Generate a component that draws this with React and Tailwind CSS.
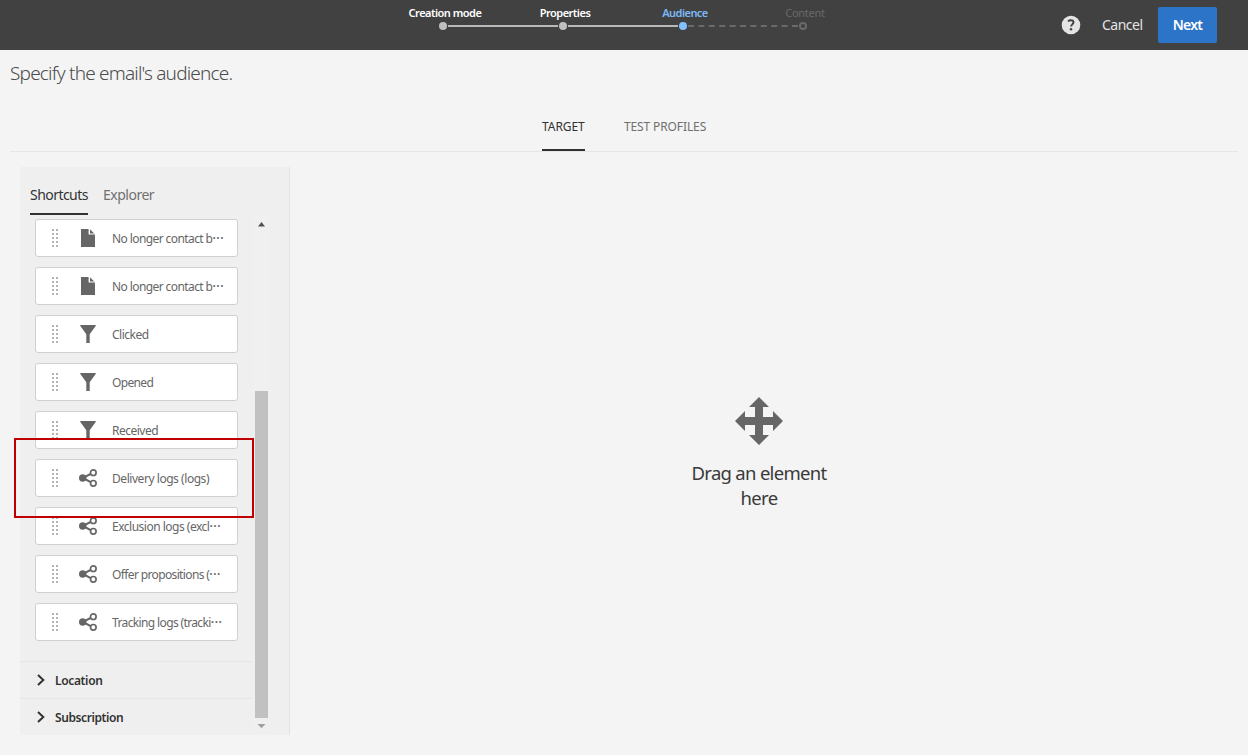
const clean = "font-['Noto_Sans','Open_Sans',sans-serif]";

const STEPS = [
  { label: "Creation mode", tracking: "tracking-[-0.5px]", color: "font-semibold text-white", dot: "bg-[#bfbfbf]", line: "solid" },
  { label: "Properties", tracking: "tracking-[-0.5px]", color: "font-semibold text-white", dot: "bg-[#bfbfbf]", line: "solid" },
  { label: "Audience", tracking: "tracking-[-0.55px]", color: "font-semibold text-[#7cb8f5]", dot: "bg-[#83c0ff]", line: "dashed" },
  { label: "Content", tracking: "tracking-[-0.25px]", color: "font-normal text-[#696969]", dot: "border-2 border-[#6a6a6a]", line: null },
];

const ITEMS = [
  { icon: "doc", label: "No longer contact b", cut: true, tracking: "tracking-[-0.59px]" },
  { icon: "doc", label: "No longer contact b", cut: true, tracking: "tracking-[-0.59px]" },
  { icon: "funnel", label: "Clicked", tracking: "tracking-[-0.5px]" },
  { icon: "funnel", label: "Opened", tracking: "tracking-[-0.65px]" },
  { icon: "funnel", label: "Received", tracking: "tracking-[-0.5px]" },
  { icon: "share", label: "Delivery logs (logs)", tracking: "tracking-[-0.45px]" },
  { icon: "share", label: "Exclusion logs (excl", cut: true, tracking: "tracking-[-0.5px]" },
  { icon: "share", label: "Offer propositions (", cut: true, tracking: "tracking-[-0.63px]" },
  { icon: "share", label: "Tracking logs (tracki", cut: true, tracking: "tracking-[-0.63px]" },
];

function Icon({ name }) {
  return (
    <svg width="18" height="18" viewBox="0 0 18 18" fill="#666" className="shrink-0">
      {name === "doc" && <path d="M2 0h7.6v5.6H16V18H2zM11 0.3L15.3 4.5H11z" />}
      {name === "funnel" && <path d="M1.3 0h15.4v1l-6 8.2V18H7.3V9.2L1.3 1z" />}
      {name === "share" && (
        <g>
          <path d="M4 9L14 3.6M4 9l10 5.4" stroke="#666" strokeWidth="2" />
          <circle cx="3.7" cy="9" r="3.7" />
          <circle cx="14.3" cy="3.7" r="2.8" fill="#fff" stroke="#666" strokeWidth="1.7" />
          <circle cx="14.3" cy="14.3" r="2.8" fill="#fff" stroke="#666" strokeWidth="1.7" />
        </g>
      )}
    </svg>
  );
}

function Grip() {
  return (
    <div className="grid shrink-0 grid-cols-2 gap-0.5">
      {Array.from({ length: 10 }, (_, i) => (
        <span key={i} className="size-0.5 bg-[#b3b3b3]" />
      ))}
    </div>
  );
}

function Step({ step }) {
  return (
    <li className="flex w-[120px] flex-col">
      <div className={`flex h-4 w-[124px] -translate-x-[56px] items-center justify-center whitespace-nowrap text-[11px] leading-4 ${step.tracking} ${step.color}`}>
        {step.label}
      </div>
      <div className="mt-px flex h-2 items-center">
        <span className={`size-2 shrink-0 rounded-full ${step.dot}`} />
        {step.line === "solid" && <span className="ml-px mr-px h-0.5 grow bg-[#b9b9b9]" />}
        {step.line === "dashed" && (
          <svg width="112" height="2">
            <path d="M1 1H112" stroke="#6a6a6a" strokeWidth="2" strokeDasharray="6 4.4" />
          </svg>
        )}
      </div>
    </li>
  );
}

function Section({ label, tracking }) {
  return (
    <div className="flex h-[37px] w-[233px] items-center border-t border-[#e6e6e6] pl-[17px]">
      <svg width="8" height="12" viewBox="0 0 8 12" fill="none" stroke="#323232" strokeWidth="2">
        <path d="M1 1l5.3 5L1 11" />
      </svg>
      <span className={`ml-[10px] pt-0.5 text-[12px] font-semibold text-[#323232] ${tracking}`}>{label}</span>
    </div>
  );
}

export default function App() {
  return (
    <div className={`flex h-[755px] w-[1248px] flex-col overflow-hidden bg-[#f4f4f4] ${clean}`}>
      <header className="flex h-[50px] shrink-0 bg-[#414141] pl-[439px]">
        <ol className="flex w-[480px] pt-[5px]">
          {STEPS.map((s) => (
            <Step key={s.label} step={s} />
          ))}
        </ol>
        <div className="ml-[142px] flex items-center">
          <svg width="20" height="20" viewBox="0 0 20 20">
            <circle cx="10" cy="10" r="9.3" fill="#e4e4e4" />
            <path d="M7 6.3C7.8 5.5 8.8 5.2 9.9 5.2c1.6 0 2.6.8 2.6 2.1 0 2-2.4 2.1-2.4 4.3" fill="none" stroke="#414141" strokeWidth="1.9" />
            <circle cx="10" cy="14.3" r="1.2" fill="#414141" />
          </svg>
          <button className="ml-[21px] w-[41px] whitespace-nowrap pb-0.5 text-left text-[14px] tracking-[-0.5px] text-[#e4e4e4]">Cancel</button>
          <button className="ml-[15px] h-9 w-[59px] rounded-[2px] bg-[#2c74c7] pb-0.5 text-[14px] font-semibold tracking-[-0.75px] text-white">Next</button>
        </div>
      </header>

      <h1 className="h-[54px] shrink-0 pl-[10px] pt-[9px] text-[19px] font-light leading-[28px] tracking-[-0.8px] text-[#4b4b4b]">
        Specify the email's audience.
      </h1>

      <nav className="mx-[10px] flex h-12 shrink-0 justify-start gap-[39px] border-b border-[#e6e6e6] pl-[532px] text-[12px] leading-[46px]">
        <div className="h-[47px] w-[43px] whitespace-nowrap border-b-2 border-[#323232] tracking-[-0.05px] text-[#323232]">TARGET</div>
        <div className="whitespace-nowrap tracking-[-0.12px] text-[#707070]">TEST PROFILES</div>
      </nav>

      <main className="flex grow pl-5 pt-[15px]">
        <aside className="relative flex h-[568px] w-[270px] shrink-0 flex-col border-r border-[#e4e4e4] bg-[#efefef]">
          <div className="flex h-12 shrink-0 gap-[15px] pl-[10px] text-[14px] leading-[56px]">
            <div className="h-12 w-[58px] whitespace-nowrap border-b-2 border-[#323232] tracking-[-0.55px] text-[#323232]">Shortcuts</div>
            <div className="whitespace-nowrap tracking-[-0.5px] text-[#707070]">Explorer</div>
          </div>
          <div className="flex h-[520px]">
            <div className="w-[234px]">
              <ul className="flex h-[446px] flex-col gap-[10px] pl-[15px] pt-1">
                {ITEMS.map((item, i) => (
                  <li key={i} className="flex h-[38px] w-[203px] shrink-0 items-center rounded-[3px] border border-[#d0d0d0] bg-white pl-4">
                    <Grip />
                    <span className="ml-[21px] flex">
                      <Icon name={item.icon} />
                    </span>
                    <span className={`ml-[15px] whitespace-nowrap pt-0.5 text-[12px] text-[#666] ${item.tracking}`}>
                      {item.label}
                      {item.cut && <span className="font-semibold tracking-[0.6px]">···</span>}
                    </span>
                  </li>
                ))}
              </ul>
              <Section label="Location" tracking="tracking-[-0.35px]" />
              <Section label="Subscription" tracking="tracking-[-0.4px]" />
            </div>
            <div className="flex w-4 flex-col bg-[#f0f0f0] pl-px pt-[7px]">
              <svg width="13" height="5" viewBox="0 0 13 5">
                <path d="M3 4.5L6.5 0L10 4.5z" fill="#505050" />
              </svg>
              <div className="mt-[164px] h-[327px] w-[13px] bg-[#c1c1c1]" />
              <svg width="13" height="5" viewBox="0 0 13 5" className="mt-1.5">
                <path d="M2.5 0h8L6.5 4.3z" fill="#a0a0a0" />
              </svg>
            </div>
          </div>
          <div className="absolute left-[-6px] top-[271px] h-20 w-60 border-2 border-[#c00000]" />
        </aside>

        <section className="flex grow flex-col items-center pr-5 pt-[230px]">
          <div className="flex w-[160px] flex-col items-center">
            <svg width="48" height="48" viewBox="0 0 48 48" fill="#666">
              <path d="M24 0l10 10h-6v10h10v-6l10 10-10 10v-6H28v10h6L24 48 14 38h6V28H10v6L0 24l10-10v6h10V10h-6z" />
            </svg>
            <p className="mt-[15px] w-[160px] text-center text-[18.5px] leading-[25px] tracking-[-0.7px] text-[#3a3a3a]">
              Drag an element
              <br />
              here
            </p>
          </div>
        </section>
      </main>
    </div>
  );
}
